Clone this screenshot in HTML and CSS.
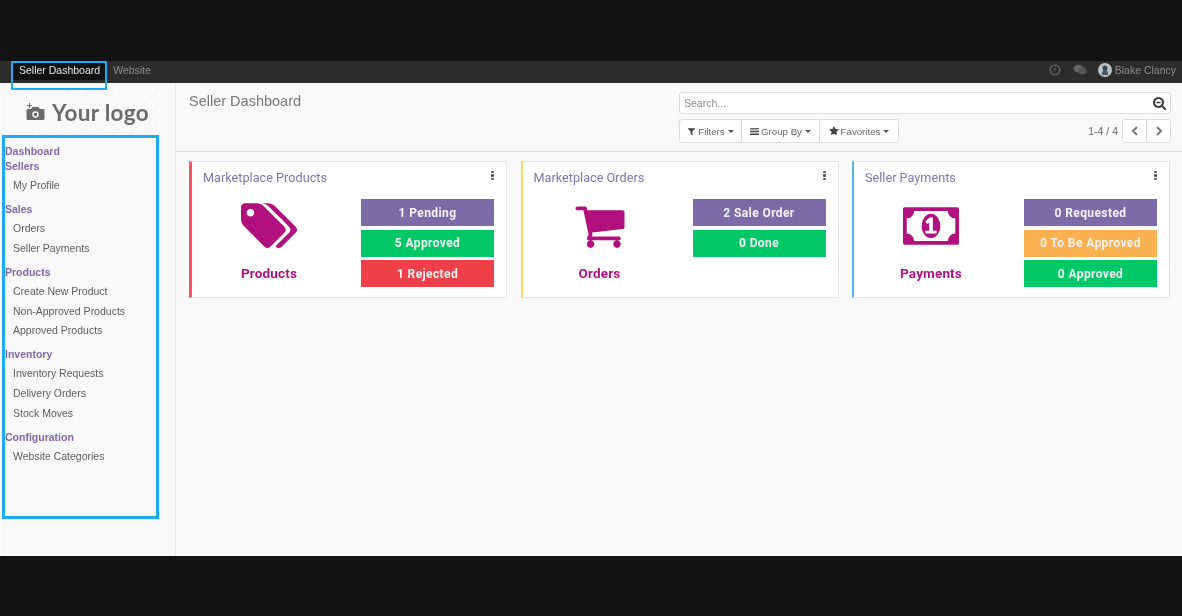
FILE: index.html
```html
<!DOCTYPE html>
<html lang="en">
<head>
<meta charset="utf-8">
<title>Seller Dashboard</title>
<link rel="stylesheet" href="styles.css">
</head>
<body>
<div class="band-top"></div>
<nav class="navbar">
  <div class="nav-left">
    <a class="nav-tab active">Seller Dashboard</a>
    <a class="nav-tab">Website</a>
  </div>
  <div class="nav-right">
    <svg class="nav-icon" viewBox="0 0 12 12"><circle cx="6" cy="6" r="4.800" fill="none" stroke="#666" stroke-width="1.300"/><path d="M6 3.400V6l-1.800 1" fill="none" stroke="#666" stroke-width="1"/></svg>
    <svg class="nav-icon chat" viewBox="0 0 14 12"><ellipse cx="5.500" cy="4.600" rx="5" ry="3.800" fill="#666"/><ellipse cx="9.300" cy="7" rx="4.400" ry="3.400" fill="#555"/></svg>
    <svg class="nav-avatar" viewBox="0 0 14 14"><circle cx="7" cy="7" r="7" fill="#b9c2c9"/><path d="M4 12c0-4 1-5 3-5.500 2 .5 3 1.500 3 5.500z" fill="#4b5563"/><circle cx="7" cy="5" r="2.500" fill="#39424e"/></svg>
    <span class="nav-user">Blake Clancy</span>
  </div>
</nav>
<div class="app">
  <aside class="sidebar">
    <div class="logo">
      <svg class="logo-icon" viewBox="0 0 20 18"><path d="M4 0v2H2v1h2v2h1V3h2V2H5V0z" fill="#6b6b6b"/><path fill-rule="evenodd" fill="#6b6b6b" d="M3 6h3l1.500-2h6L15 6h3a1.500 1.500 0 0 1 1.500 1.500v8A1.500 1.500 0 0 1 18 17H3a1.500 1.500 0 0 1-1.500-1.500v-8A1.500 1.500 0 0 1 3 6zm7.500 2.200a3.300 3.300 0 1 0 0 6.600 3.300 3.300 0 0 0 0-6.600z"/><circle cx="10.500" cy="11.500" r="1.800" fill="#6b6b6b"/></svg>
      <span class="logo-text">Your logo</span>
    </div>
    <div class="menu">
      <div class="menu-group tight">
        <div class="menu-head">Dashboard</div>
      </div>
      <div class="menu-group">
        <div class="menu-head">Sellers</div>
        <a class="menu-item">My Profile</a>
      </div>
      <div class="menu-group">
        <div class="menu-head">Sales</div>
        <a class="menu-item">Orders</a>
        <a class="menu-item">Seller Payments</a>
      </div>
      <div class="menu-group">
        <div class="menu-head">Products</div>
        <a class="menu-item">Create New Product</a>
        <a class="menu-item">Non-Approved Products</a>
        <a class="menu-item">Approved Products</a>
      </div>
      <div class="menu-group">
        <div class="menu-head">Inventory</div>
        <a class="menu-item">Inventory Requests</a>
        <a class="menu-item">Delivery Orders</a>
        <a class="menu-item">Stock Moves</a>
      </div>
      <div class="menu-group">
        <div class="menu-head">Configuration</div>
        <a class="menu-item">Website Categories</a>
      </div>
    </div>
  </aside>
  <main class="main">
    <header class="control">
      <h1 class="page-title">Seller Dashboard</h1>
      <div class="control-right">
        <div class="search">
          <span class="search-ph">Search...</span>
          <svg class="search-icon" viewBox="0 0 1664 1664"><path fill="#3f3f3f" d="M1152 704q0-185-131.500-316.500T704 256 387.500 387.500 256 704t131.500 316.500T704 1152t316.500-131.500T1152 704zm512 832q0 52-38 90t-90 38q-54 0-90-38l-343-342q-179 124-399 124-143 0-273.500-55.500t-225-150-150-225T0 704t55.500-273.500 150-225 225-150T704 0t273.500 55.500 225 150 150 225T1408 704q0 220-124 399l343 343q37 37 37 90z"/><path fill="#3f3f3f" d="M430 610h548v190H430z"/></svg>
        </div>
        <div class="tools">
          <div class="btn-group">
            <button class="tool-btn filters"><svg class="tool-icon" viewBox="0 0 1408 1792"><path fill="#444" d="M1403 307q17 41-14 70l-493 493v742q0 42-39 59-13 5-25 5-27 0-45-19l-256-256q-19-19-19-45V870L19 377q-31-29-14-70 17-39 59-39h1280q42 0 59 39z"/></svg>Filters<span class="caret"></span></button>
            <button class="tool-btn groupby"><svg class="tool-icon" viewBox="0 0 12 12"><path fill="#444" d="M0 1.500h12v1.800H0zM0 5.100h12v1.800H0zM0 8.700h12v1.800H0z"/></svg>Group By<span class="caret"></span></button>
            <button class="tool-btn favorites"><svg class="tool-icon star" viewBox="0 0 1664 1792"><path fill="#444" d="M1664 647q0 22-26 48l-363 354 86 500q1 7 1 20 0 21-10.500 35.500T1321 1619q-19 0-40-12l-449-236-449 236q-22 12-40 12-21 0-31.500-14.500T301 1569q0-6 2-20l86-500L25 695Q0 668 0 647q0-37 56-46l502-73L783 73q19-41 49-41t49 41l225 455 502 73q56 9 56 46z"/></svg>Favorites<span class="caret"></span></button>
          </div>
          <div class="pager">
            <span class="pager-text">1-4 / 4</span>
            <div class="btn-group">
              <button class="page-btn"><svg viewBox="0 0 10 12" class="chev"><path d="M7 2 3 6l4 4" fill="none" stroke="#777" stroke-width="2"/></svg></button>
              <button class="page-btn"><svg viewBox="0 0 10 12" class="chev"><path d="m3 2 4 4-4 4" fill="none" stroke="#777" stroke-width="2"/></svg></button>
            </div>
          </div>
        </div>
      </div>
    </header>
    <section class="cards">
      <article class="card red-edge">
        <h2 class="card-title">Marketplace Products</h2>
        <span class="dots"><i></i><i></i><i></i></span>
        <div class="card-body">
          <div class="card-left">
            <svg class="card-icon" viewBox="-34 -19 1966 1830"><path fill="#b0117f" fill-rule="evenodd" transform="translate(64 0)" d="M384 448q0-53-37.500-90.500t-90.500-37.500-90.500 37.500-37.500 90.500 37.500 90.500 90.500 37.500 90.500-37.500 37.500-90.500zm1067 576q0 53-37 90l-491 492q-39 37-91 37-53 0-90-37l-715-716q-38-37-64.500-101t-26.500-117v-416q0-52 38-90t90-38h416q53 0 117 26.500t102 64.500l715 714q37 39 37 91zm384 0q0 53-37 90l-491 492q-38 38-91 38-36 0-59-14t-53-45l470-470q37-37 37-90 0-52-37-91l-715-714q-38-38-102-64.500t-117-26.500h224q53 0 117 26.500t102 64.500l715 714q37 39 37 91z"/></svg>
            <div class="card-label">Products</div>
          </div>
          <div class="card-stats">
            <div class="stat purple">1 Pending</div>
            <div class="stat green">5 Approved</div>
            <div class="stat red">1 Rejected</div>
          </div>
        </div>
      </article>
      <article class="card yellow-edge">
        <h2 class="card-title">Marketplace Orders</h2>
        <span class="dots"><i></i><i></i><i></i></span>
        <div class="card-body">
          <div class="card-left">
            <svg class="card-icon" viewBox="-21 4 1834 1834"><path fill="#b0117f" d="M704 1536q0 52-38 90t-90 38-90-38-38-90 38-90 90-38 90 38 38 90zm896 0q0 52-38 90t-90 38-90-38-38-90 38-90 90-38 90 38 38 90zm128-1088v512q0 24-16.500 42.500t-40.500 21.500l-1044 122q13 60 13 70 0 16-24 64h920q26 0 45 19t19 45-19 45-45 19h-1024q-26 0-45-19t-19-45q0-11 8-31.500t16-36 21.500-40 15.500-29.500l-177-823h-204q-26 0-45-19t-19-45 19-45 45-19h256q16 0 28.500 6.500t19.500 15.500 13 24.500 8 26 5.500 29.500 4.500 26h1201q26 0 45 19t19 45z"/></svg>
            <div class="card-label">Orders</div>
          </div>
          <div class="card-stats">
            <div class="stat purple">2 Sale Order</div>
            <div class="stat green">0 Done</div>
          </div>
        </div>
      </article>
      <article class="card blue-edge">
        <h2 class="card-title">Seller Payments</h2>
        <span class="dots"><i></i><i></i><i></i></span>
        <div class="card-body">
          <div class="card-left">
            <svg class="card-icon" viewBox="-33 -29 1986 1850"><path fill="#b0117f" fill-rule="evenodd" d="M768 1152h384v-96h-128v-448h-114l-148 137 77 80q42-37 55-57h2v288h-128v96zm512-256q0 70-21 142t-59.500 134-101.500 101-138 39-138-39-101.500-101-59.500-134-21-142 21-142 59.500-134 101.500-101 138-39 138 39 101.500 101 59.500 134 21 142zm512 256v-512q-106 0-181-75t-75-181h-1152q0 106-75 181t-181 75v512q106 0 181 75t75 181h1152q0-106 75-181t181-75zm128-832v1152q0 26-19 45t-45 19h-1792q-26 0-45-19t-19-45v-1152q0-26 19-45t45-19h1792q26 0 45 19t19 45z"/></svg>
            <div class="card-label">Payments</div>
          </div>
          <div class="card-stats">
            <div class="stat purple">0 Requested</div>
            <div class="stat orange">0 To Be Approved</div>
            <div class="stat green">0 Approved</div>
          </div>
        </div>
      </article>
    </section>
  </main>
</div>
<div class="band-bottom"></div>
<div class="mark mark-tab"></div>
<div class="mark mark-menu"></div>
</body>
</html>
```
FILE: styles.css
```css
* { box-sizing: border-box; }
html, body { margin: 0; padding: 0; }
html { background: #131313; }
body {
  position: relative;
  width: 1182px;
  height: 616px;
  overflow: hidden;
  display: flex;
  flex-direction: column;
  background: #131313;
  font-family: "Liberation Sans", Arial, sans-serif;
  filter: blur(.35px);
}
.band-top { height: 61px; flex: none; background: #131313; }
.band-bottom { height: 60px; flex: none; background: #131313; }

.navbar {
  height: 22px;
  flex: none;
  display: flex;
  justify-content: space-between;
  align-items: stretch;
  background: #2c2c2c;
  font-size: 10.500px;
  padding-left: 12px;
  padding-right: 6px;
}
.nav-left { display: flex; }
.nav-tab {
  display: flex;
  align-items: center;
  padding: 0 7px 2px;
  color: #8d8d8d;
  height: 19px;
}
.nav-tab.active { background: #121212; color: #e4e4e4; margin-right: -1px; }
.nav-right { display: flex; align-items: center; height: 19px; padding-bottom: 1px; }
.nav-icon { width: 12px; height: 12px; margin-right: 12px; }
.nav-icon.chat { width: 14px; margin-right: 11px; }
.nav-avatar { width: 14px; height: 14px; margin-right: 3px; }
.nav-user { color: #8a8a8a; }

.app { flex: none; height: 473px; display: flex; background: #f9f9f9; }

.sidebar {
  width: 176px;
  flex: none;
  border-right: 1px solid #e6e6e6;
  background: #f9f9f9;
  border-left: 1px solid #fdfdfd;
}
.logo {
  height: 46px;
  margin: 6px 16px 0 14px;
  display: flex;
  align-items: center;
  justify-content: center;
  gap: 7px;
  background: repeating-linear-gradient(135deg, #f9f9f9 0 5px, #f4f4f4 5px 6px);
}
.logo-icon { width: 20px; height: 18px; }
.logo-text {
  font-family: "Lato", "Noto Sans", sans-serif;
  font-weight: 700;
  font-size: 22.500px;
  letter-spacing: .3px;
  color: #6b6b6b;
}
.menu { padding: 9px 0 0 4px; }
.menu-group { display: flex; flex-direction: column; margin-bottom: 6.600px; }
.menu-group.tight { margin-bottom: 0; }
.menu-head {
  height: 15px;
  line-height: 15px;
  font-size: 10.500px;
  font-weight: 700;
  color: #7f68ae;
}
.menu-item {
  height: 19.600px;
  line-height: 19.600px;
  padding-left: 8px;
  font-size: 10.500px;
  color: #5c5c5c;
}
.menu-group > .menu-head + .menu-item { margin-top: 2px; }

.main { flex: 1; min-width: 0; display: flex; flex-direction: column; }
.control {
  height: 69px;
  flex: none;
  display: flex;
  justify-content: space-between;
  border-bottom: 1px solid #d9d9d9;
  padding: 9px 11px 0 13px;
}
.page-title {
  margin: 0;
  font-size: 14.500px;
  font-weight: 400;
  line-height: 19px;
  color: #777;
}
.control-right { width: 492px; display: flex; flex-direction: column; gap: 5px; }
.search {
  height: 22px;
  display: flex;
  justify-content: space-between;
  align-items: center;
  padding: 0 4px;
  background: #fff;
  border: 1px solid #dcdcdc;
  border-radius: 3px;
}
.search-ph { font-size: 10.500px; color: #8c8c8c; }
.search-icon { width: 13px; height: 13px; }
.tools { display: flex; justify-content: space-between; align-items: stretch; }
.btn-group { display: flex; }
.tool-btn, .page-btn {
  height: 24px;
  display: flex;
  align-items: center;
  justify-content: center;
  padding: 0;
  background: #fff;
  border: 1px solid #dcdcdc;
  margin-left: -1px;
  font-family: inherit;
  font-size: 9.700px;
  color: #666;
}
.btn-group > :first-child { margin-left: 0; border-radius: 3px 0 0 3px; }
.btn-group > :last-child { border-radius: 0 3px 3px 0; }
.filters { width: 63px; }
.groupby { width: 79px; }
.favorites { width: 80px; }
.tool-icon { width: 9px; height: 9px; margin-right: 2px; }
.tool-icon.star { width: 10px; height: 10px; }
.caret {
  margin-left: 3px;
  width: 0;
  height: 0;
  border-left: 3px solid transparent;
  border-right: 3px solid transparent;
  border-top: 3px solid #555;
}
.pager { display: flex; align-items: center; gap: 4px; }
.pager-text { font-size: 10.500px; color: #666; }
.page-btn { width: 25px; }
.chev { width: 10px; height: 12px; }

.cards {
  display: grid;
  grid-template-columns: repeat(3, 1fr);
  gap: 13.500px;
  padding: 9px 12px 0 13px;
}
.card {
  position: relative;
  height: 137px;
  background: #fff;
  border: 1px solid #e6e6e6;
  border-left-width: 2px;
  padding: 7px 12px 0 11px;
}
.red-edge { border-left-width: 3px; border-left-color: #f5555a; }
.yellow-edge { border-left-color: #fbd95a; }
.blue-edge { border-left-color: #4fb5ee; }
.card-title {
  margin: 0;
  font-family: "Roboto", sans-serif;
  font-weight: 400;
  font-size: 12.700px;
  line-height: 17px;
  color: #8074ad;
}
.dots {
  position: absolute;
  top: 9px;
  right: 12px;
  display: flex;
  flex-direction: column;
  gap: 1px;
}
.dots i { display: block; width: 3px; height: 2.400px; border-radius: 1px; background: #555; }
.card-body { display: flex; justify-content: space-between; margin-top: 13px; }
.card-left {
  width: 154px;
  margin-left: -11px;
  display: flex;
  flex-direction: column;
  align-items: center;
}
.card-icon { height: 54px; width: 58px; }
.card-label {
  margin-top: 12px;
  font-family: "Roboto", sans-serif;
  font-weight: 700;
  font-size: 13.500px;
  letter-spacing: .15px;
  line-height: 17px;
  color: #b0117f;
}
.card-stats { width: 133px; display: flex; flex-direction: column; gap: 3.500px; }
.stat {
  height: 27px;
  display: flex;
  align-items: center;
  justify-content: center;
  font-family: "Roboto", sans-serif;
  font-weight: 700;
  font-size: 12px;
  letter-spacing: .4px;
  color: #f3f3f3;
}
.purple { background: #7f6aa8; }
.green { background: #00c868; }
.red { background: #ef3f49; }
.orange { background: #fbb14f; }

.mark { position: absolute; border-style: solid; border-color: #1caafa; }
.mark-tab { left: 11px; top: 61px; width: 96px; height: 29px; border-width: 2px; }
.mark-menu { left: 2px; top: 135px; width: 157px; height: 384px; border-width: 3px; }
```
